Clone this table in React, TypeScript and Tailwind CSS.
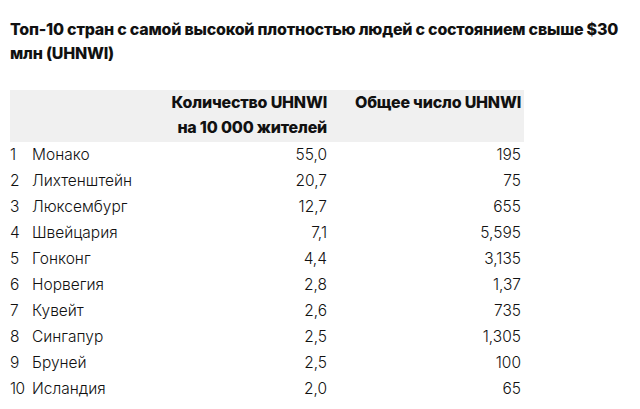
import React from "react"

const rows = [
  ["1", "Монако", "55,0", "195"],
  ["2", "Лихтенштейн", "20,7", "75"],
  ["3", "Люксембург", "12,7", "655"],
  ["4", "Швейцария", "7,1", "5,595"],
  ["5", "Гонконг", "4,4", "3,135"],
  ["6", "Норвегия", "2,8", "1,37"],
  ["7", "Кувейт", "2,6", "735"],
  ["8", "Сингапур", "2,5", "1,305"],
  ["9", "Бруней", "2,5", "100"],
  ["10", "Исландия", "2,0", "65"],
]

const App = () => {
  return (
    <div
      className="w-[640px] h-[409px] bg-white text-[#111] overflow-hidden"
      style={{ fontFamily: "Inter, 'Liberation Sans', sans-serif" }}
    >
      <h1 className="pl-[10px] pt-[17px] text-[16px] leading-[24px] font-extrabold tracking-[-0.22px] whitespace-nowrap">
        Топ-10 стран с самой высокой плотностью людей с состоянием свыше $30
        <br />
        млн (UHNWI)
      </h1>
      <div className="ml-[10px] mt-[25px] w-[514px]">
        <div className="grid grid-cols-[22px_133px_165px_1fr] bg-[#f0f0f0] h-[52px] text-[16px] leading-[25px] font-extrabold tracking-[-0.2px]">
          <div />
          <div />
          <div className="text-right pr-[3px] whitespace-nowrap">
            Количество UHNWI
            <br />
            на 10 000 жителей
          </div>
          <div className="text-right pr-[3px] whitespace-nowrap">Общее число UHNWI</div>
        </div>
        {rows.map(([n, name, v, total]) => (
          <div
            key={n}
            className="grid grid-cols-[22px_133px_165px_1fr] h-[26px] items-center text-[15.5px] font-light"
          >
            <div className="tracking-[-0.5px]">{n}</div>
            <div>{name}</div>
            <div className="text-right pr-[3px]">{v}</div>
            <div className="text-right pr-[3px]">{total}</div>
          </div>
        ))}
      </div>
    </div>
  )
}

export default App
